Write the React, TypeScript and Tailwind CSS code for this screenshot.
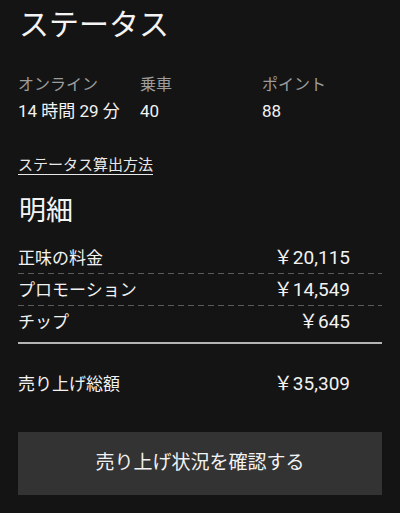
import React from "react";

const font = { fontFamily: 'Roboto, "Noto Sans CJK JP", sans-serif' };

function Row({ label, amount }: { label: string; amount: string }) {
  return (
    <div className="flex h-[31px] items-center justify-between pr-[32px]">
      <span className="text-[17px] leading-[22px] text-[#f2f2f2]">{label}</span>
      <span className="text-[19px] leading-[22px] text-[#f2f2f2]">{amount}</span>
    </div>
  );
}

function Dash() {
  return <div className="h-[1px] bg-[repeating-linear-gradient(90deg,#5a5a5a_0px,#5a5a5a_6px,transparent_6px,transparent_10px)]" />;
}

export default function App() {
  return (
    <div className="w-[400px] h-[513px] overflow-hidden bg-[#141414] px-[18px]" style={font}>
      <h1 className="pt-[7px] text-[30px] leading-[36px] text-[#f4f4f4] font-normal pl-[1px]">ステータス</h1>

      <div className="mt-[32px] grid grid-cols-[122px_122px_1fr]">
        <div className="text-[16px] leading-[20px] text-[#9c9c9c]">オンライン</div>
        <div className="text-[16px] leading-[20px] text-[#9c9c9c]">乗車</div>
        <div className="text-[16px] leading-[20px] text-[#9c9c9c]">ポイント</div>
        <div className="mt-[6px] text-[17px] leading-[21px] text-[#f2f2f2]">14 時間 29 分</div>
        <div className="mt-[6px] text-[17px] leading-[21px] text-[#f2f2f2]">40</div>
        <div className="mt-[6px] text-[17px] leading-[21px] text-[#f2f2f2]">88</div>
      </div>

      <div className="mt-[31px]">
        <span className="text-[15px] leading-[20px] text-[#e8e8e8] underline underline-offset-[4px] decoration-[1px]">
          ステータス算出方法
        </span>
      </div>

      <h2 className="mt-[18px] text-[27px] leading-[32px] text-[#f4f4f4] font-normal pl-[1px]">明細</h2>

      <div className="mt-[15px]">
        <Row label="正味の料金" amount="￥20,115" />
        <Dash />
        <Row label="プロモーション" amount="￥14,549" />
        <Dash />
        <Row label="チップ" amount="￥645" />
      </div>
      <div className="mt-[5px] h-[2px] bg-[#b4b4b4]" />

      <div className="mt-[25px] flex h-[30px] items-center justify-between pr-[32px]">
        <span className="text-[17px] leading-[22px] text-[#f2f2f2]">売り上げ総額</span>
        <span className="text-[19px] leading-[22px] text-[#f2f2f2]">￥35,309</span>
      </div>

      <button className="mt-[33px] flex h-[63px] w-full items-center justify-center bg-[#333333] text-[19px] text-[#f2f2f2]">
        売り上げ状況を確認する
      </button>
    </div>
  );
}
